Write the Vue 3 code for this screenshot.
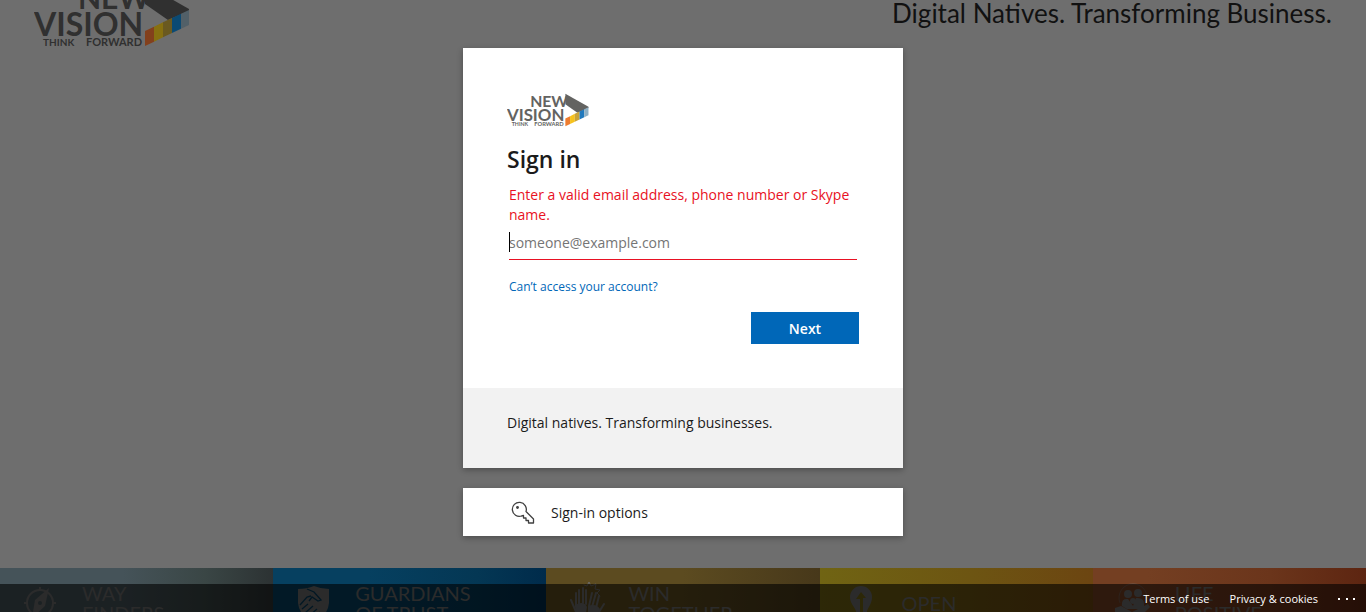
<script setup>
import { ref, h } from 'vue'

const email = ref('')

const values = [
  { key: 'way', lines: ['WAY', 'FINDERS'] },
  { key: 'trust', lines: ['GUARDIANS', 'OF TRUST'] },
  { key: 'win', lines: ['WIN', 'TOGETHER'] },
  { key: 'open', lines: ['OPEN'] },
  { key: 'life', lines: ['LIFE', 'POSITIVE'] },
]

const BrandLogo = (props) => {
  const ink = props.dim ? '#303030' : '#636361'
  const bands = props.dim
    ? ['#83401c', '#877010', '#6a5920', '#0b4a73', '#526068']
    : ['#ee7d30', '#f7c21c', '#c9a338', '#2179bd', '#8fb0c4']
  const text = (x, y, size, label) =>
    h('text', { x, y, fill: ink, 'font-size': size, 'font-weight': 700, 'font-family': 'Lato, sans-serif' }, label)
  return h('svg', { viewBox: '34 -17 156 64', role: 'img', 'aria-label': 'New Vision, Think Forward' }, [
    text(78, 9, 30, 'NEW'),
    text(34, 36, 32, 'VISION'),
    text(43, 46, 10, 'THINK'),
    text(86, 46, 11, 'FORWARD'),
    h('path', { d: 'M145 -16 189 9 189 11 168 20 145 4Z', fill: ink }),
    ...bands.map((fill, i) => {
      const x = 145 + i * 9
      const r = Math.min(x + 9, 189)
      const top = (v) => 31 - (v - 145) * 0.48
      return h('path', { d: `M${x} ${top(x)} ${r} ${top(r)} ${r} ${top(r) + 15} ${x} ${top(x) + 15}Z`, fill })
    }),
  ])
}
BrandLogo.props = ['dim']
</script>

<template>
  <div class="page">
    <div class="backdrop">
      <div class="banner">
        <BrandLogo class="banner-logo" :dim="true" />
        <p class="slogan">Digital Natives. Transforming Business.</p>
      </div>
      <div class="values">
        <div v-for="v in values" :key="v.key" class="value" :class="v.key">
          <svg class="value-icon" viewBox="0 0 38 44" aria-hidden="true">
            <g v-if="v.key === 'way'" fill="none" stroke="currentColor" stroke-width="2">
              <circle cx="18" cy="22" r="13" />
              <path d="M18 6v4M2 22h4M30 22h4M18 34v4" />
              <path d="M27 7 23 25 10 37 13 19Z" fill="currentColor" stroke="none" />
              <circle cx="18" cy="22" r="2" fill="#455359" stroke="none" />
            </g>
            <g v-else-if="v.key === 'trust'">
              <path d="M3 8Q12 8 19 5 26 8 34 8V22Q33 34 19 42 4 34 3 22Z" fill="currentColor" />
              <path d="M5 24 12 16 16 15M12 8 19 11 26 19 23 20 17 16 14 20M7 28 13 23M10 32 18 25M14 35 22 28M18 38 25 31" fill="none" stroke="#053b59" stroke-width="1.300" />
            </g>
            <g v-else-if="v.key === 'win'" fill="none" stroke="currentColor" stroke-linecap="round">
              <path d="M11 23V9M15 22V7M18 23V9M8 25V12M8 31 3 19M21 25 24 12M24 26 28 12M28 27 31 15M31 31 36 23" stroke-width="2" />
              <path d="M7 24Q16 19 19 26L16 42H13Q7 33 7 24ZM20 25Q28 22 32 28L25 42H20Z" fill="currentColor" stroke="none" />
              <path d="m16 4 3 1 2-4 2 4 5-2-1 5 5 1-3 3 3 3" stroke-width="1" />
            </g>
            <g v-else-if="v.key === 'open'">
              <path d="M19 5A11 11 0 0 0 8 16C8 22 12 25 14 30V44H25V30C27 25 30 22 30 16A11 11 0 0 0 19 5Z" fill="currentColor" />
              <path d="M18 44V18H14L19 11 24 17H21V44Z" fill="#6f6213" />
            </g>
            <g v-else fill="currentColor">
              <circle cx="13" cy="13" r="4" /><circle cx="23" cy="12" r="4" />
              <circle cx="18" cy="20" r="3" />
              <path d="M7 25Q6 17 13 18L18 25 21 17Q30 16 29 25L24 28H12ZM0 27 6 25 17 31 33 23 35 26 24 37 8 39 0 33Z" />
              <path d="M5 22A14 14 0 1 1 31 22" fill="none" stroke="currentColor" stroke-width="1" opacity=".5" />
            </g>
          </svg>
          <p class="value-name"><span v-for="l in v.lines" :key="l">{{ l }}</span></p>
        </div>
      </div>
    </div>

    <main class="content">
      <form class="card" novalidate @submit.prevent>
        <div class="card-body">
          <BrandLogo class="card-logo" />
          <h1>Sign in</h1>
          <label for="email" class="error">Enter a valid email address, phone number or Skype name.</label>
          <div class="field">
            <input id="email" v-model="email" type="email" placeholder="someone@example.com" aria-invalid="true" />
            <span class="caret"></span>
          </div>
          <a class="help" href="#">Can’t access your account?</a>
          <div class="actions"><button class="next" type="submit">Next</button></div>
        </div>
        <div class="card-note">Digital natives. Transforming businesses.</div>
      </form>
      <button class="options" type="button">
        <svg viewBox="0 0 24 24" width="24" height="24" fill="none" stroke="#404040" stroke-width="1.300" stroke-linejoin="round" aria-hidden="true">
          <path d="M15 10.500A7 7 0 1 0 10.500 15L12.500 14.500V17H15V19.500H17.500V22H22.500V18Z" />
          <circle cx="6.500" cy="6.500" r=".8" fill="#404040" />
        </svg>
        <span>Sign-in options</span>
      </button>
    </main>

    <footer class="footer">
      <a href="#">Terms of use</a>
      <a href="#">Privacy &amp; cookies</a>
      <button type="button" aria-label="More information">
        <svg viewBox="0 0 18 4" width="18" height="4" fill="#fff" aria-hidden="true">
          <rect x="0" y="1" width="2" height="2" /><rect x="8" y="1" width="2" height="2" /><rect x="15" y="1" width="2" height="2" />
        </svg>
      </button>
    </footer>
  </div>
</template>

<style>
body {
  margin: 0;
}
</style>

<style scoped>
.page {
  position: relative;
  min-height: 100vh;
  box-sizing: border-box;
  overflow: hidden;
  background: #6e6e6e;
  color: #1b1b1b;
  font-family: "Open Sans", "Noto Sans", sans-serif;
  font-size: 14px;
  line-height: 20px;
}
.backdrop {
  position: absolute;
  inset: 0;
  display: flex;
  flex-direction: column;
  justify-content: space-between;
  overflow: hidden;
  font-family: Lato, sans-serif;
}
.banner {
  display: flex;
  justify-content: space-between;
  align-items: flex-start;
  padding: 0 34px;
}
.banner-logo {
  width: 156px;
  height: 64px;
  margin-top: -17px;
}
.slogan {
  margin: 0;
  font-size: 26px;
  line-height: 26px;
  color: #111;
}
.values {
  display: grid;
  grid-template-columns: repeat(5, 1fr);
  height: 44px;
}
.value {
  display: flex;
  align-items: center;
  gap: 22px;
  height: 70px;
  padding-left: 22px;
  color: #6c6c6c;
}
.value-icon {
  flex: none;
  width: 38px;
  height: 44px;
}
.value-name {
  margin: 0;
  font-size: 20px;
  line-height: 20px;
}
.value-name span {
  display: block;
}
.way { background: linear-gradient(90deg, #455359 45%, #3a4645 75%, #2c3233); }
.trust { background: linear-gradient(90deg, #064060 35%, #043754 75%, #002b4b); }
.win { background: linear-gradient(90deg, #5c4b20 50%, #47381a); }
.open { background: linear-gradient(90deg, #706413, #6d5512 55%, #6c4511); }
.life { background: linear-gradient(90deg, #743f22 20%, #6b351b 65%, #5d2511); }

.content {
  position: relative;
  display: flex;
  flex-direction: column;
  align-items: center;
  gap: 20px;
  padding: 48px 0 76px;
}
.card,
.options {
  width: 440px;
  max-width: 100%;
  box-sizing: border-box;
  box-shadow: 0 2px 6px rgba(0, 0, 0, 0.3);
}
.card {
  background: #fff;
}
.card-body {
  display: flex;
  flex-direction: column;
  padding: 44px;
}
.card-logo {
  width: 82px;
  height: 36px;
}
h1 {
  margin: 15px 0 10px;
  font-size: 23px;
  font-weight: 600;
  line-height: 32px;
}
.error {
  margin: 0 2px;
  color: #e81123;
}
.field {
  position: relative;
  margin: 0 2px;
}
input {
  display: block;
  width: 100%;
  height: 35px;
  box-sizing: border-box;
  padding: 0;
  border: 0;
  border-bottom: 1px solid #e81123;
  outline: 0;
  background: transparent;
  color: #1b1b1b;
  font: inherit;
}
input::placeholder {
  color: #757575;
  opacity: 1;
}
.caret {
  position: absolute;
  left: 0;
  top: 7px;
  width: 1px;
  height: 20px;
  background: #000;
}
.help {
  align-self: flex-start;
  margin: 17px 2px 15px;
  color: #0067b8;
  font-size: 12px;
  text-decoration: none;
}
.actions {
  display: flex;
  justify-content: flex-end;
}
.next {
  width: 108px;
  height: 32px;
  padding: 1px 0 0;
  border: 0;
  background: #0067b8;
  color: #fff;
  font: inherit;
  font-weight: 600;
}
.card-note {
  padding: 25px 44px 35px;
  background: #f2f2f2;
}
.options {
  display: flex;
  align-items: center;
  gap: 16px;
  height: 48px;
  padding: 1px 48px 0;
  border: 0;
  background: #fff;
  color: #1b1b1b;
  font: inherit;
}
.footer {
  position: absolute;
  right: 0;
  bottom: 0;
  left: 0;
  display: flex;
  justify-content: flex-end;
  align-items: center;
  gap: 20px;
  height: 28px;
  box-sizing: border-box;
  padding: 2px 10px 0 0;
  background: rgba(0, 0, 0, 0.6);
  font-size: 11px;
}
.footer a {
  color: #fff;
  text-decoration: none;
}
.footer button {
  display: flex;
  padding: 0;
  border: 0;
  background: none;
}
</style>
